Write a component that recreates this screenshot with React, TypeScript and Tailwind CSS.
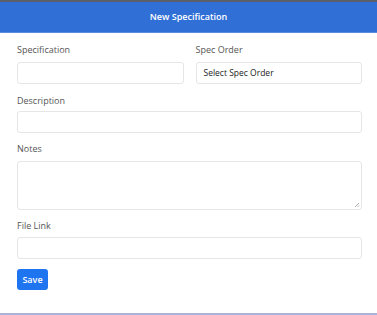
import React from "react";

const font = { fontFamily: '"Open Sans", "Liberation Sans", sans-serif' };

function Label({ children }: { children: React.ReactNode }) {
  return <div className="text-[9px] leading-[12px] text-[#555] h-[12px] shrink-0">{children}</div>;
}

export default function App() {
  return (
    <div className="w-[377px] h-[315px] bg-white flex flex-col overflow-hidden" style={font}>
      <div className="h-[2px] bg-[#5b5e6b] shrink-0" />
      <div className="h-[31px] shrink-0 bg-[#2f6fd6] flex items-center justify-center border-b border-[#5d8be0]">
        <span className="text-white text-[9px] font-semibold">New Specification</span>
      </div>
      <div className="flex-1 pl-[17px] pr-[15px] pt-[11px] flex flex-col">
        <div className="flex gap-[12px]">
          <div className="flex-1 flex flex-col gap-[6px]">
            <Label>Specification</Label>
            <div className="h-[22px] border border-[#e6e6e6] rounded-[3px] bg-white" />
          </div>
          <div className="flex-1 flex flex-col gap-[6px]">
            <Label>Spec Order</Label>
            <div className="h-[22px] border border-[#e6e6e6] rounded-[3px] bg-white flex items-center px-[7px] text-[8.5px] text-[#222]">
              Select Spec Order
            </div>
          </div>
        </div>
        <div className="mt-[11px] flex flex-col gap-[4px]">
          <Label>Description</Label>
          <div className="h-[22px] border border-[#e6e6e6] rounded-[3px]" />
        </div>
        <div className="mt-[10px] flex flex-col gap-[6px]">
          <Label>Notes</Label>
          <div className="h-[49px] border border-[#e6e6e6] rounded-[3px] relative">
            <svg className="absolute right-[1px] bottom-[1px]" width="6" height="6" viewBox="0 0 6 6">
              <path d="M5 1 L1 5 M5 3.5 L3.5 5" stroke="#999" strokeWidth="0.8" />
            </svg>
          </div>
        </div>
        <div className="mt-[10px] flex flex-col gap-[5px]">
          <Label>File Link</Label>
          <div className="h-[22px] border border-[#e6e6e6] rounded-[3px]" />
        </div>
        <div className="mt-[10px]">
          <div className="w-[31px] h-[21px] bg-[#1f74f0] rounded-[3px] flex items-center justify-center text-white text-[9px] font-semibold">
            Save
          </div>
        </div>
      </div>
      <div className="h-[2px] shrink-0 bg-[#a9b3d6]" />
    </div>
  );
}
